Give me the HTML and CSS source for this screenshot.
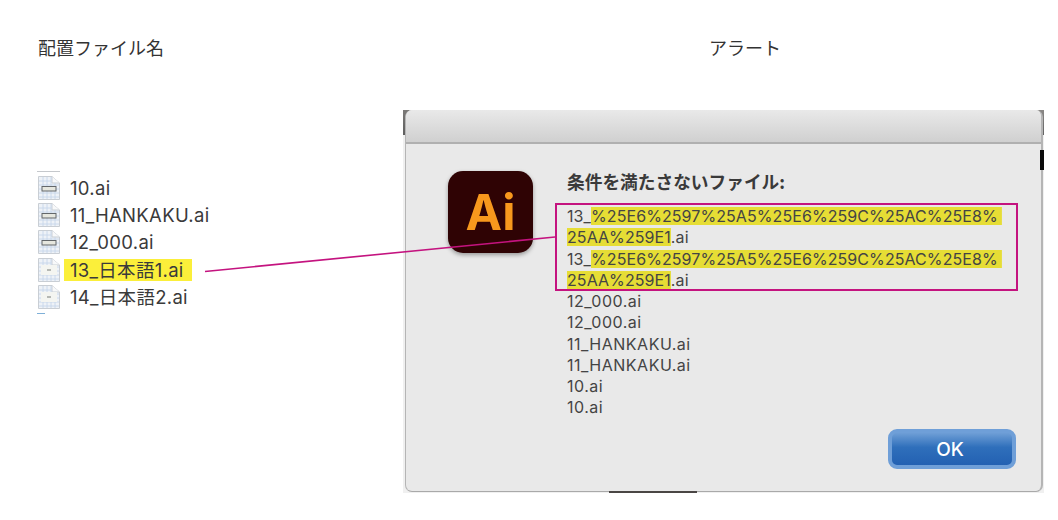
FILE: index.html
```html
<!DOCTYPE html>
<html lang="ja">
<head>
<meta charset="utf-8">
<title>配置ファイル名</title>
<link rel="stylesheet" href="styles.css">
</head>
<body>
<svg class="defs" width="0" height="0" aria-hidden="true">
  <defs>
    <g id="doc-base">
      <path d="M1.5 .5H15L22.5 7V23.5H1.5Z" fill="#eef2f7" stroke="#c9ced4"/>
      <path d="M15 .5V7H22.5" fill="#f8f9fa" stroke="#c9ced4"/>
      <path d="M2 5H14M2 9H22M2 13H22M2 17H22M2 21H22M6 1V23M10 1V23M14 1V23M18 7V23" stroke="#c6d6ea" stroke-width=".9" fill="none"/>
    </g>
    <symbol id="doc-a" viewBox="0 0 24 24">
      <use href="#doc-base"/>
      <rect x="5" y="10.5" width="14" height="4.5" fill="#e6e7df" stroke="#63676a" stroke-width="1"/>
    </symbol>
    <symbol id="doc-b" viewBox="0 0 24 24">
      <use href="#doc-base"/>
      <rect x="4" y="7" width="16" height="10" fill="#f4f5f1"/>
      <rect x="10" y="11" width="4" height="2" fill="#b5b8b4"/>
    </symbol>
  </defs>
</svg>

<main class="page">
  <section class="col-files">
    <h2 class="caption">配置ファイル名</h2>
    <div class="files">
      <div class="rule rule-top"></div>
      <div class="file"><svg class="doc"><use href="#doc-a"/></svg><span class="name">10.ai</span></div>
      <div class="file"><svg class="doc"><use href="#doc-a"/></svg><span class="name">11_HANKAKU.ai</span></div>
      <div class="file"><svg class="doc"><use href="#doc-a"/></svg><span class="name">12_000.ai</span></div>
      <div class="file"><svg class="doc"><use href="#doc-b"/></svg><span class="name marked">13_日本語1.ai</span></div>
      <div class="file"><svg class="doc"><use href="#doc-b"/></svg><span class="name">14_日本語2.ai</span></div>
      <div class="rule rule-bottom"></div>
    </div>
  </section>

  <section class="col-alert">
    <h2 class="caption caption-alert">アラート</h2>
    <div class="dialog">
      <span class="edge edge-tl"></span>
      <span class="edge edge-tr"></span>
      <span class="edge edge-r"></span>
      <span class="edge edge-b"></span>
      <div class="window">
        <div class="titlebar"></div>
        <div class="content">
          <div class="app-icon"><span>Ai</span></div>
          <div class="message">
            <p class="heading">条件を満たさないファイル:</p>
            <div class="callout">
              <div class="line">13_<mark class="mark-long">%25E6%2597%25A5%25E6%259C%25AC%25E8%</mark></div>
              <div class="line"><mark>25AA%259E1</mark>.ai</div>
              <div class="line">13_<mark class="mark-long">%25E6%2597%25A5%25E6%259C%25AC%25E8%</mark></div>
              <div class="line"><mark>25AA%259E1</mark>.ai</div>
            </div>
            <div class="line">12_000.ai</div>
            <div class="line">12_000.ai</div>
            <div class="line">11_HANKAKU.ai</div>
            <div class="line">11_HANKAKU.ai</div>
            <div class="line">10.ai</div>
            <div class="line">10.ai</div>
          </div>
        </div>
        <div class="actions"><button class="ok" type="button">OK</button></div>
      </div>
    </div>
  </section>

  <svg class="leader" width="1058" height="520" aria-hidden="true">
    <line x1="205" y1="271.5" x2="555" y2="237" stroke="#c4137f" stroke-width="1.6"/>
  </svg>
</main>
</body>
</html>
```

FILE: styles.css
```css
* { box-sizing: border-box; }

html, body {
  margin: 0;
  background: #fff;
}

.defs { display: block; height: 0; }

.page {
  position: relative;
  display: flex;
  width: 1058px;
  height: 520px;
  overflow: hidden;
  font-family: "Inter", "Liberation Sans", "Noto Sans CJK JP", sans-serif;
  color: #333;
}

.caption {
  margin: 0;
  font-size: 18px;
  line-height: 20px;
  font-weight: 400;
  color: #333;
  font-family: "Noto Sans CJK JP", sans-serif;
}

.col-files {
  width: 403px;
  padding: 37px 0 0 38px;
  flex: none;
}

.files {
  margin: 114px 0 0 -1px;
  display: flex;
  flex-direction: column;
  align-items: flex-start;
}

.rule { height: 1px; }
.rule-top { width: 23px; background: #c5c8cc; margin-bottom: 2px; }
.rule-bottom { width: 8px; background: #7fb0d8; margin-top: 2px; }

.file {
  display: flex;
  align-items: center;
  height: 27.4px;
  width: 100%;
}

.doc {
  width: 24px;
  height: 24px;
  flex: none;
  filter: blur(.35px);
}

.name {
  margin-left: 9px;
  font-size: 18.5px;
  letter-spacing: .3px;
  line-height: 22px;
  color: #3a3a3a;
  font-family: "Inter", "Noto Sans CJK JP", sans-serif;
}

.marked {
  margin-left: 3px;
  padding: 0 8px 0 6px;
  background: #fbef3a;
}

.col-alert {
  flex: 1;
  padding-top: 37px;
}

.caption-alert { margin-left: 306px; }

.dialog {
  position: relative;
  width: 641px;
  height: 383px;
  margin-top: 53px;
  padding: 0 1px 1px 2px;
  background: #f0f0f0;
}

.edge { position: absolute; display: block; }
.edge-tl { left: 0; top: 0; width: 10px; height: 25px; background: linear-gradient(#7c7a78, #5f5f5f); }
.edge-tr { right: 0; top: 0; width: 10px; height: 25px; background: linear-gradient(#8a8886, #626262); }
.edge-r { right: 0; top: 40px; width: 4px; height: 20px; background: #0b0b0b; z-index: 2; }
.edge-b { left: 206px; bottom: 0; width: 88px; height: 2px; background: #4a4644; z-index: 2; }

.window {
  position: relative;
  display: flex;
  flex-direction: column;
  height: 100%;
  background: #e9e9e9;
  border-radius: 7px;
  border-right: 2px solid #b5b5b5;
  border-bottom: 1px solid #a9a9a9;
  border-left: 1px solid #b5b5b5;
  overflow: hidden;
}

.titlebar {
  height: 34px;
  flex: none;
  background: linear-gradient(#e9e9e9, #d0d0d0);
  border-bottom: 2px solid #b0b0b0;
}

.content {
  display: flex;
  flex: 1;
  padding: 27px 0 0 42px;
}

.app-icon {
  width: 85px;
  height: 82px;
  flex: none;
  display: flex;
  align-items: center;
  justify-content: center;
  border-radius: 15px;
  background: #2f0304;
  box-shadow: 0 2px 4px rgba(0, 0, 0, .35);
  color: #f7981d;
  font: 700 49px/1 "Inter", "Liberation Sans", sans-serif;
}

.message {
  margin-left: 34px;
  width: 480px;
}

.heading {
  margin: 0 0 12px;
  font-family: "Noto Sans CJK JP", sans-serif;
  font-size: 17.7px;
  line-height: 20px;
  font-weight: 700;
  color: #3a3a3a;
}

.callout {
  margin-left: -12px;
  width: 463px;
  padding: 1px 0 0 10px;
  height: 88px;
  border: 2px solid #c4137f;
}

.line {
  font-size: 16px;
  letter-spacing: .5px;
  line-height: 21.25px;
  color: #444;
  white-space: nowrap;
}

.callout .line { letter-spacing: .1px; }

mark {
  background: linear-gradient(#e6dd35, #e6dd35) center / 100% 18px no-repeat;
  color: #444;
  padding: 0;
  letter-spacing: .08px;
}

.mark-long { padding-right: 4px; }

.actions {
  display: flex;
  justify-content: flex-end;
  padding: 0 25px 22px 0;
}

.ok {
  width: 128px;
  height: 40px;
  padding: 0 6px 0 2px;
  border: 4px solid #6f9fd8;
  border-radius: 9px;
  background: linear-gradient(#6e9ed6, #2f6fbb 45%, #2361b2);
  color: #fff;
  font: 500 19px/1 "Inter", "Liberation Sans", sans-serif;
}

.leader {
  position: absolute;
  left: 0;
  top: 0;
  pointer-events: none;
}
```
